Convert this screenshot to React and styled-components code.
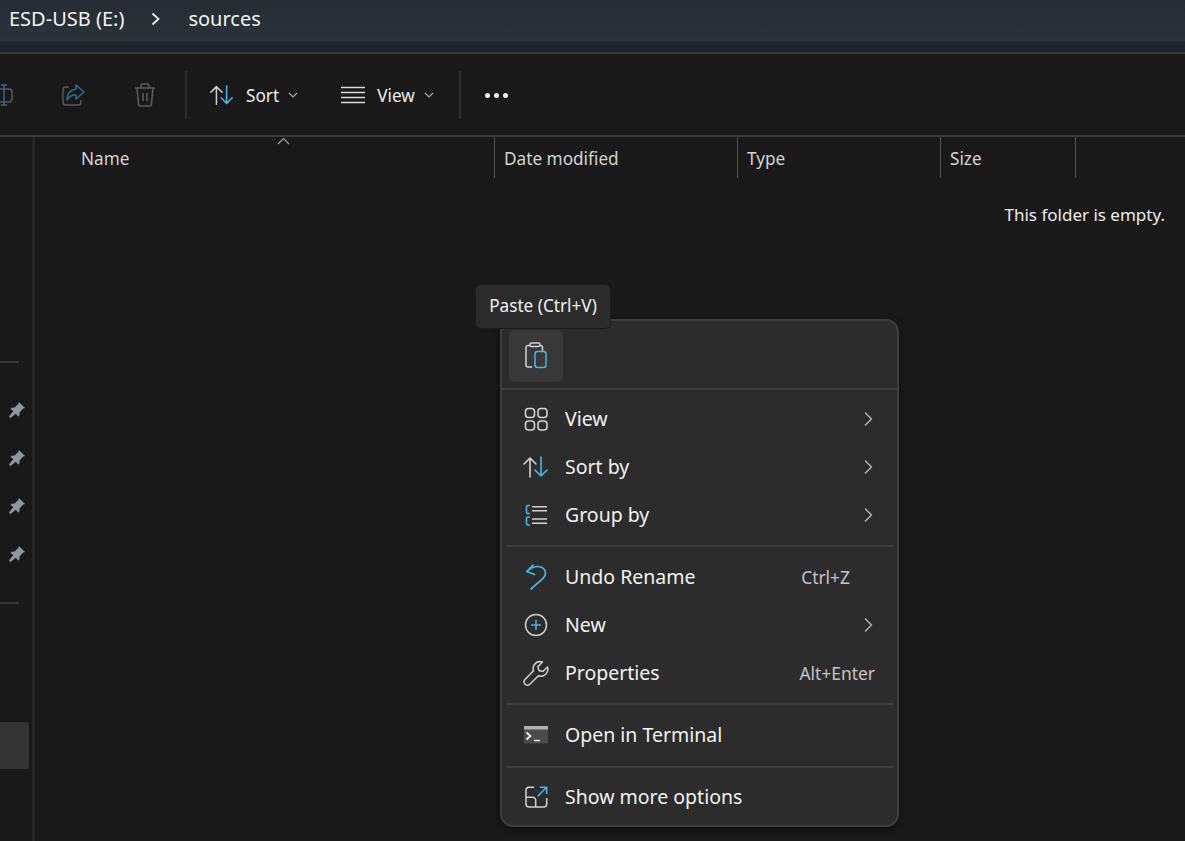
import React from 'react';
import styled, { createGlobalStyle } from 'styled-components';

const GlobalStyle = createGlobalStyle`
  html, body { margin: 0; padding: 0; background: #191919; }
  body { font-family: "Noto Sans", "Open Sans", sans-serif; color: #fff; }
  #root { width: 1185px; height: 841px; overflow: hidden; position: relative; }
`;

const BLUE = '#4cb4e7';
const GREY = '#d2d2d2';

const Page = styled.div`
  width: 1185px;
  height: 841px;
  display: flex;
  flex-direction: column;
  background: #191919;
  position: relative;
  overflow: hidden;
`;

const AddressBar = styled.div`
  height: 52px;
  box-sizing: border-box;
  flex: none;
  background: linear-gradient(#252c33 0, #2b3239 41px, #1f272e 42px, #1c242b 100%);
  display: flex;
  align-items: flex-start;
  padding: 6px 0 0 9px;
  font-size: 20px;
  line-height: 26px;
  color: #f4f4f4;
`;

const Crumb = styled.span`
  white-space: nowrap;
`;

const CrumbArrow = styled.svg`
  width: 12px;
  height: 14px;
  margin: 6px 26px 0 26px;
  flex: none;
`;

const Toolbar = styled.div`
  height: 85px;
  box-sizing: border-box;
  flex: none;
  border-top: 2px solid #3a3a3a;
  border-bottom: 2px solid #3a3a3a;
  display: flex;
  align-items: center;
`;

const ToolIcon = styled.svg`
  width: 26px;
  height: 26px;
  flex: none;
  margin-left: ${p => p.$left}px;
`;

const ToolSep = styled.div`
  width: 2px;
  height: 48px;
  flex: none;
  background: #2e2e2e;
  margin-left: ${p => p.$left}px;
`;

const ToolLabel = styled.span`
  font-size: 17.2px;
  margin: 2px 0 0 ${p => p.$left}px;
  color: #ececec;
`;

const Caret = styled.svg`
  width: 10px;
  height: 6px;
  margin-left: 9px;
  flex: none;
`;

const Dots = styled.div`
  display: flex;
  gap: 4px;
  margin: 2px 0 0 24px;
`;

const Dot = styled.i`
  width: 5px;
  height: 5px;
  border-radius: 50%;
  background: #f0f0f0;
`;

const Body = styled.div`
  flex: 1;
  display: flex;
  min-height: 0;
`;

const Sidebar = styled.div`
  width: 35px;
  flex: none;
  padding-top: 224px;
  box-sizing: border-box;
  display: flex;
  flex-direction: column;
  border-right: 3px solid #262626;
`;

const SideRule = styled.div`
  width: 19px;
  height: 2px;
  background: #383838;
  margin: ${p => p.$margin};
`;

const PinRow = styled.div`
  height: 48px;
  display: flex;
  align-items: center;
  justify-content: flex-end;
  padding-right: 6px;
`;

const PinIcon = styled.svg`
  width: 18px;
  height: 18px;
`;

const SelectedRow = styled.div`
  width: 29px;
  height: 47px;
  background: #333333;
  border-radius: 0 3px 3px 0;
  margin-top: 118px;
`;

const Main = styled.div`
  flex: 1;
  position: relative;
`;

const HeaderRow = styled.div`
  display: flex;
  height: 41px;
  position: relative;
`;

const HeaderCell = styled.div`
  width: ${p => p.$w}px;
  box-sizing: border-box;
  border-right: 1px solid #555;
  padding: 8px 0 0 ${p => p.$pad || 9}px;
  font-size: 17.2px;
  line-height: 28px;
  color: #d4d4d4;
  flex: none;
`;

const SortCaret = styled.svg`
  position: absolute;
  left: 242px;
  top: 0;
  width: 13px;
  height: 8px;
`;

const EmptyText = styled.div`
  text-align: right;
  padding: 23px 20px 0 0;
  font-size: 17px;
  line-height: 28px;
  color: #ececec;
`;

const Tooltip = styled.div`
  position: absolute;
  left: 475px;
  top: 284px;
  width: 136px;
  height: 45px;
  box-sizing: border-box;
  background: #2b2b2b;
  border: 1px solid #1c1c1c;
  border-radius: 6px;
  font-size: 17.2px;
  line-height: 42px;
  text-align: center;
  color: #f0f0f0;
  z-index: 2;
`;

const Menu = styled.div`
  position: absolute;
  left: 500px;
  top: 319px;
  width: 399px;
  height: 508px;
  box-sizing: border-box;
  background: #2c2c2c;
  border: 2px solid #3e3e3e;
  border-radius: 13px;
  box-shadow: 0 2px 8px rgba(0, 0, 0, 0.45);
  display: flex;
  flex-direction: column;
  padding-top: 9px;
`;

const QuickBar = styled.div`
  height: 58px;
  box-sizing: border-box;
  padding-left: 7px;
  flex: none;
`;

const QuickButton = styled.div`
  width: 54px;
  height: 52px;
  background: #383838;
  border-radius: 6px;
  display: flex;
  align-items: center;
  justify-content: center;
`;

const TopRule = styled.div`
  height: 2px;
  background: #3e3e3e;
  flex: none;
`;

const MenuRule = styled.div`
  height: 2px;
  background: #3e3e3e;
  margin: 0 4px 0 5px;
  flex: none;
`;

const MenuGroup = styled.div`
  padding: ${p => p.$pad};
  flex: none;
`;

const MenuRow = styled.div`
  height: 48px;
  display: flex;
  align-items: center;
  padding: 0 22px 0 20px;
`;

const MenuIcon = styled.svg`
  width: 28px;
  height: 28px;
  flex: none;
`;

const MenuLabel = styled.span`
  margin-left: 15px;
  padding-bottom: 2px;
  font-size: 19.5px;
  color: #f2f2f2;
  flex: 1;
  white-space: nowrap;
`;

const Shortcut = styled.span`
  padding-bottom: 1px;
  font-size: 17.4px;
  color: #c4c4c4;
  white-space: nowrap;
`;

const ShortcutLeft = styled(Shortcut)`
  margin-right: 25px;
`;

const Chevron = styled.svg`
  width: 10px;
  height: 16px;
  margin-right: 2px;
  flex: none;
`;

function SortArrows() {
  return (
    <g fill="none" strokeWidth="1.6" strokeLinecap="round" strokeLinejoin="round">
      <path d="M8 24V5M2 11l6-6 6 6" stroke={GREY} />
      <path d="M19 4v19M13 17l6 6 6-6" stroke={BLUE} />
    </g>
  );
}

function MoreChevron() {
  return (
    <Chevron viewBox="0 0 10 16">
      <path d="M2 1.5L8.5 8 2 14.5" fill="none" stroke="#bdbdbd" strokeWidth="1.3" />
    </Chevron>
  );
}

function Pin() {
  return (
    <PinIcon viewBox="0 0 18 18">
      <path d="M11 1l6 6-2 .8-3.4 3.6-.3 3.4-1 .6-2.5-2.6L2.5 17 1 15.5l4.2-5.3L2.7 7.7l.6-1 3.4-.3L10.3 3z" fill="#8d979f" />
    </PinIcon>
  );
}

function DownCaret() {
  return (
    <Caret viewBox="0 0 10 6">
      <path d="M1 1l4 4 4-4" fill="none" stroke="#a8a8a8" strokeWidth="1.2" />
    </Caret>
  );
}

export default function App() {
  return (
    <Page>
      <GlobalStyle />
      <AddressBar>
        <Crumb>ESD-USB (E:)</Crumb>
        <CrumbArrow viewBox="0 0 12 14">
          <path d="M2.5 1.5L8.5 7l-6 5.5" fill="none" stroke="#f0f0f0" strokeWidth="1.8" />
        </CrumbArrow>
        <Crumb>sources</Crumb>
      </AddressBar>

      <Toolbar>
        <ToolIcon $left={-9} viewBox="0 0 26 26">
          <g fill="none" strokeWidth="1.5">
            <path d="M7 7h11a3 3 0 0 1 3 3v7a3 3 0 0 1-3 3H7" stroke="#5a5a5a" />
            <path d="M13 3v20M10 3h6M10 23h6" stroke="#2d6c8f" />
          </g>
        </ToolIcon>
        <ToolIcon $left={43} viewBox="0 0 26 26">
          <g fill="none" strokeWidth="1.5" strokeLinejoin="round">
            <path d="M9 5H6a3 3 0 0 0-3 3v12a3 3 0 0 0 3 3h12a3 3 0 0 0 3-3v-2" stroke="#5a5a5a" />
            <path d="M16 3l8 7-8 7v-4c-4 0-7 1-9 5 0-6 3-10 9-11z" stroke="#2d6c8f" />
          </g>
        </ToolIcon>
        <ToolIcon $left={46} viewBox="0 0 26 26">
          <g fill="none" stroke="#5c5c5c" strokeWidth="1.6" strokeLinejoin="round">
            <path d="M3 6h20M9 6V3.500A1.500 1.500 0 0 1 10.500 2h5A1.500 1.500 0 0 1 17 3.500V6M5 6l1.500 16a2 2 0 0 0 2 2h9a2 2 0 0 0 2-2L21 6M11 11v8M15 11v8" />
          </g>
        </ToolIcon>
        <ToolSep $left={27} />
        <ToolIcon $left={22} viewBox="0 0 28 28">
          <SortArrows />
        </ToolIcon>
        <ToolLabel $left={11}>Sort</ToolLabel>
        <DownCaret />
        <ToolIcon $left={42} viewBox="0 0 26 26">
          <path d="M1 5.500h24M1 10.500h24M1 15.500h24M1 20.500h24" stroke="#dcdcdc" strokeWidth="1.3" fill="none" />
        </ToolIcon>
        <ToolLabel $left={11}>View</ToolLabel>
        <DownCaret />
        <ToolSep $left={25} />
        <Dots>
          <Dot />
          <Dot />
          <Dot />
        </Dots>
      </Toolbar>

      <Body>
        <Sidebar>
          <SideRule $margin="0 0 23px" />
          <PinRow><Pin /></PinRow>
          <PinRow><Pin /></PinRow>
          <PinRow><Pin /></PinRow>
          <PinRow><Pin /></PinRow>
          <SideRule $margin="24px 0 0" />
          <SelectedRow />
        </Sidebar>
        <Main>
          <HeaderRow>
            <HeaderCell $w={460} $pad={46}>Name</HeaderCell>
            <SortCaret viewBox="0 0 13 8">
              <path d="M1 7l5.500-5.500L12 7" fill="none" stroke="#a0a0a0" strokeWidth="1.2" />
            </SortCaret>
            <HeaderCell $w={243}>Date modified</HeaderCell>
            <HeaderCell $w={203}>Type</HeaderCell>
            <HeaderCell $w={135}>Size</HeaderCell>
          </HeaderRow>
          <EmptyText>This folder is empty.</EmptyText>
        </Main>
      </Body>

      <Tooltip>Paste (Ctrl+V)</Tooltip>

      <Menu>
        <QuickBar>
          <QuickButton>
            <MenuIcon viewBox="0 0 28 28">
              <g fill="none" strokeWidth="1.500" strokeLinejoin="round">
                <path d="M10 25H6a2 2 0 0 1-2-2V5.500a2 2 0 0 1 2-2h2M18 3.500h.5a2 2 0 0 1 2 2V9" stroke={GREY} />
                <rect x="8" y="1" width="10" height="3.500" rx="1.500" stroke={GREY} />
                <rect x="13" y="9.500" width="11" height="16" rx="2.500" stroke={BLUE} />
              </g>
            </MenuIcon>
          </QuickButton>
        </QuickBar>
        <TopRule />

        <MenuGroup $pad="5px 0 6px">
          <MenuRow>
            <MenuIcon viewBox="0 0 28 28">
              <g fill="none" stroke={GREY} strokeWidth="1.600">
                <rect x="3.500" y="3.500" width="9" height="9" rx="3" />
                <rect x="16" y="3.500" width="9" height="9" rx="3" />
                <rect x="3.500" y="16" width="9" height="9" rx="3" />
                <rect x="16" y="16" width="9" height="9" rx="3" />
              </g>
            </MenuIcon>
            <MenuLabel>View</MenuLabel>
            <MoreChevron />
          </MenuRow>
          <MenuRow>
            <MenuIcon viewBox="0 0 28 28">
              <SortArrows />
            </MenuIcon>
            <MenuLabel>Sort by</MenuLabel>
            <MoreChevron />
          </MenuRow>
          <MenuRow>
            <MenuIcon viewBox="0 0 28 28">
              <g fill="none" strokeWidth="1.600">
                <path d="M8 4.500H6a1.500 1.500 0 0 0-1.500 1.500v5a1.500 1.500 0 0 0 1.500 1.500h2M8 16H6a1.500 1.500 0 0 0-1.500 1.500v5A1.500 1.500 0 0 0 6 24h2" stroke={BLUE} />
                <path d="M10 5.700h15M10 9.700h15M10 18h15M10 22.300h15" stroke={GREY} />
              </g>
            </MenuIcon>
            <MenuLabel>Group by</MenuLabel>
            <MoreChevron />
          </MenuRow>
        </MenuGroup>
        <MenuRule />

        <MenuGroup $pad="6px 0 6px">
          <MenuRow>
            <MenuIcon viewBox="0 0 28 28">
              <path d="M11 2L4.700 8.500l7.800 3M4.700 8.500C8 5.500 12 3.500 16 3.500c4.200 0 7.500 2.800 7.500 6.500 0 2-.8 3.700-2.200 5.200L9 26" fill="none" stroke={BLUE} strokeWidth="1.700" strokeLinecap="round" strokeLinejoin="round" />
            </MenuIcon>
            <MenuLabel>Undo Rename</MenuLabel>
            <ShortcutLeft>Ctrl+Z</ShortcutLeft>
          </MenuRow>
          <MenuRow>
            <MenuIcon viewBox="0 0 28 28">
              <circle cx="14" cy="14" r="10.500" fill="none" stroke={GREY} strokeWidth="1.500" />
              <path d="M14 9v10M9 14h10" fill="none" stroke={BLUE} strokeWidth="1.500" />
            </MenuIcon>
            <MenuLabel>New</MenuLabel>
            <MoreChevron />
          </MenuRow>
          <MenuRow>
            <MenuIcon viewBox="0 0 28 28">
              <path d="M18 2.500a7 7 0 0 0-6.500 9.300L3 20.500a3.400 3.400 0 0 0 4.800 4.800l8.600-8.600A7 7 0 0 0 25.500 8l-4.800 4.500-3.800-1-1-3.700L20.500 3a7 7 0 0 0-2.500-.5z" fill="none" stroke={GREY} strokeWidth="1.500" strokeLinejoin="round" />
            </MenuIcon>
            <MenuLabel>Properties</MenuLabel>
            <Shortcut>Alt+Enter</Shortcut>
          </MenuRow>
        </MenuGroup>
        <MenuRule />

        <MenuGroup $pad="6px 0 7px">
          <MenuRow>
            <MenuIcon viewBox="0 0 28 28">
              <rect x="2" y="5" width="24" height="17.500" fill="#4b4b4b" />
              <rect x="2" y="5" width="24" height="3.500" fill="#b0b0b0" />
              <path d="M4.500 11.500l4 3.500-4 3.500" fill="none" stroke="#f2f2f2" strokeWidth="1.700" />
              <path d="M12 19.500h6" stroke="#f2f2f2" strokeWidth="1.500" />
            </MenuIcon>
            <MenuLabel>Open in Terminal</MenuLabel>
          </MenuRow>
        </MenuGroup>
        <MenuRule />

        <MenuGroup $pad="5px 0 0">
          <MenuRow>
            <MenuIcon viewBox="0 0 28 28">
              <g fill="none" strokeWidth="1.500" strokeLinejoin="round">
                <path d="M12 4.300H7A3 3 0 0 0 4 7.300v13.700a3 3 0 0 0 3 3h14.700a3 3 0 0 0 3-3v-6M4 14.300h6.700a3 3 0 0 1 3 3V24" stroke={GREY} />
                <path d="M15.700 13.300l9-9M18 4.300h6.700V11" stroke={BLUE} />
              </g>
            </MenuIcon>
            <MenuLabel>Show more options</MenuLabel>
          </MenuRow>
        </MenuGroup>
      </Menu>
    </Page>
  );
}
